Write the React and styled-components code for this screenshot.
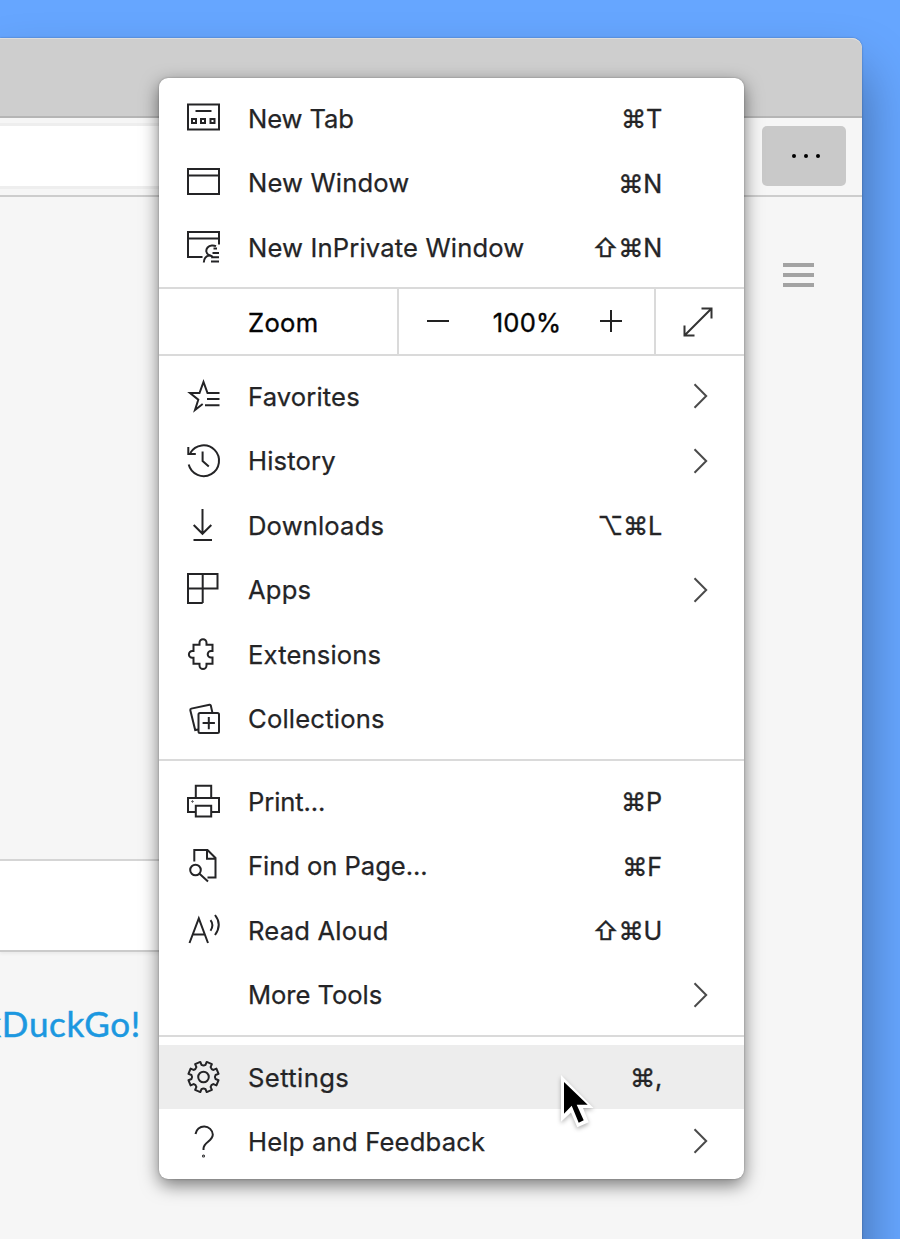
import React from "react";
import styled, { createGlobalStyle } from "styled-components";

const Global = createGlobalStyle`
  * { box-sizing: border-box; }
  body { margin: 0; overflow: hidden; font-family: Inter, "Liberation Sans", sans-serif; }
`;

const Desktop = styled.div`
  position: relative;
  width: 900px;
  height: 1239px;
  padding-top: 38px;
  overflow: hidden;
  background: #66a6ff;
`;

const Browser = styled.div`
  width: 862px;
  height: 1300px;
  display: flex;
  flex-direction: column;
  border-top-right-radius: 10px;
  background: #f6f6f6;
  box-shadow: 0 0 2px rgba(0, 0, 0, 0.35), 0 34px 54px rgba(0, 0, 0, 0.38);
`;

const TabStrip = styled.div`
  height: 80px;
  border-top: 1px solid #dedede;
  border-bottom: 2px solid #b5b5b5;
  border-top-right-radius: 10px;
  background: #cecece;
`;

const Toolbar = styled.div`
  height: 79px;
  display: flex;
  align-items: center;
  justify-content: space-between;
  padding: 0 16px 1px 0;
  border-bottom: 2px solid #cdcdcd;
  background: #f6f6f6;
`;

const AddressField = styled.div`
  width: 600px;
  height: 66px;
  border: 3px solid #eeeeee;
  border-left: 0;
  background: #fff;
`;

const MoreButton = styled.div`
  width: 84px;
  height: 60px;
  display: flex;
  align-items: center;
  justify-content: center;
  gap: 8px;
  padding-left: 3px;
  border-radius: 5px;
  background: #c9c9c9;
`;

const Dot = styled.span`
  width: 4px;
  height: 4px;
  border-radius: 50%;
  background: #000;
`;

const Page = styled.div`
  flex: 1;
  display: flex;
  flex-direction: column;
`;

const PageHeader = styled.div`
  height: 662px;
  display: flex;
  justify-content: flex-end;
  padding: 66px 48px 0 0;
`;

const Burger = styled.div`
  width: 31px;
  height: 24px;
  display: flex;
  flex-direction: column;
  justify-content: space-between;
`;

const BurgerBar = styled.span`
  height: 4px;
  background: #a3a3a3;
`;

const SearchBox = styled.div`
  width: 600px;
  height: 93px;
  border-top: 2px solid #d5d5d5;
  border-bottom: 2px solid #cbcbcb;
  background: #fff;
  box-shadow: 0 2px 3px rgba(0, 0, 0, 0.05);
`;

const Tagline = styled.div`
  width: 141px;
  margin-top: 51px;
  display: flex;
  justify-content: flex-end;
  color: #1c98e0;
  font-family: Lato, sans-serif;
  font-size: 35px;
  -webkit-text-stroke: 0.5px #1c98e0;
  letter-spacing: 0.7px;
  line-height: 40px;
  white-space: nowrap;
`;

const Menu = styled.div`
  position: absolute;
  left: 159px;
  top: 78px;
  width: 585px;
  height: 1101px;
  border-radius: 9px;
  background: #fff;
  color: #242426;
  box-shadow: 0 0 2px rgba(0, 0, 0, 0.3), 0 6px 18px rgba(0, 0, 0, 0.52);
`;

const Section = styled.div`
  padding: ${(p) => p.$top}px 0 ${(p) => p.$bottom}px;
`;

const Separator = styled.div`
  height: 2px;
  background: #dadada;
`;

const Row = styled.div`
  height: ${(p) => p.$h || 64.5}px;
  display: flex;
  align-items: center;
  padding: 0 34px 0 24px;
  background: ${(p) => (p.$active ? "#ededed" : "transparent")};
`;

const IconSlot = styled.span`
  width: 40px;
  height: 40px;
  flex: none;
  margin-right: 25px;
  svg { display: block; }
`;

const Label = styled.span`
  flex: 1;
  font-size: 25.6px;
  -webkit-text-stroke: 0.25px currentColor;
  letter-spacing: ${(p) => p.$ls ?? 0.15}px;
  white-space: nowrap;
`;

const Shortcut = styled.span`
  padding: 2px 48px 0 0;
  font-size: 25.2px;
  -webkit-text-stroke: 0.35px currentColor;
  letter-spacing: -0.2px;
  white-space: nowrap;
`;

const Chevron = styled.svg`
  width: 18px;
  height: 28px;
`;

const ZoomRow = styled.div`
  height: 65px;
  display: flex;
  color: #050505;
  font-size: 25.6px;
  -webkit-text-stroke: 0.35px currentColor;
`;

const ZoomName = styled.div`
  width: 240px;
  display: flex;
  align-items: center;
  padding: 1px 0 0 89px;
  letter-spacing: 0.3px;
  border-right: 2px solid #dadada;
`;

const ZoomControls = styled.div`
  width: 257px;
  display: flex;
  align-items: center;
  justify-content: space-between;
  padding: 0 31px 0 26px;
  border-right: 2px solid #dadada;
`;

const ZoomValue = styled.span`
  padding: 1px 0 0 4px;
  letter-spacing: 0.15px;
`;

const FullScreen = styled.div`
  flex: 1;
  display: flex;
  align-items: center;
  justify-content: center;
  padding-right: 4px;
`;

const Cursor = styled.svg`
  position: absolute;
  left: 552px;
  top: 1066px;
  width: 52px;
  height: 72px;
  filter: drop-shadow(0 2px 2px rgba(0, 0, 0, 0.3));
`;

const ICONS = {
  tab: (
    <>
      <path d="M5 6.500h31v25H5z" />
      <path d="M12.500 13h16" />
      <path d="M9 21h4v4h-4zM18 21h4v4h-4zM27.500 21h4v4h-4z" />
    </>
  ),
  window: <path d="M5 6h31v25H5zM5 12.500h31" />,
  inprivate: (
    <>
      <path d="M19.500 30H5V5h31v12.500M5 11.500h31" />
      <path d="M33 19.200Q31 18.300 28.800 18.500C25.200 18.800 23 21.500 23.300 24.500 23.500 26.200 24.700 27.500 26.500 28.300 23 29 21 31.500 20.800 35.500" />
      <path d="M30.500 21.500h3.500M29.500 26h6.500M28 30.200h8M28 34.500h8M25.500 28.200q2.500.2 4 1.500" />
    </>
  ),
  star: (
    <>
      <path d="M36.500 17H24.500L20.500 6 16.500 17H7l8.300 6.700-3.300 10.300 7.700-6" />
      <path d="M24 23H36.500M22 29.200H36.500" />
    </>
  ),
  history: (
    <>
      <path d="M7.300 12A15.400 15.400 0 1 1 5.700 23.500" />
      <path d="M5.300 6v7h7.500" />
      <path d="M19.600 10.500V20l6.200 5.500" />
    </>
  ),
  download: <path d="M19.500 4v24.500M10.700 20l8.800 8.800L28.300 20M10.500 35h18.500" />,
  apps: <path d="M5 4h29.500V18.500H5zM19.700 4v29M5 18.500v14.500h14.700" />,
  puzzle: (
    <path d="M10.500 10.800h6V8.800a3.500 3.500 0 0 1 7 0v2h6v6.200h-1.500a3.300 3.300 0 0 0 0 6.600h1.500v6.200h-6v1.700a3.500 3.500 0 0 1-7 0v-1.700h-6v-6h-1.200a3.400 3.400 0 0 1 0-6.800h1.200z" />
  ),
  collections: (
    <>
      <rect x="15.500" y="14" width="20.500" height="20" rx="1.500" />
      <path d="M25.800 18v12.300M19.600 24.100h12.300M15.500 30.500l-3.300.5L7.300 11.300q-.3-1.300 1-1.700L26.500 5.800q1-.2 1.300.8l1.600 7" />
    </>
  ),
  print: (
    <>
      <path d="M12.800 31H5V17h31v14h-7.500M12.800 17V4.800h15.400v12M12.800 24.700h15.400v10.700H12.800z" />
      <circle cx="9.500" cy="20.500" r=".7" strokeWidth="1" />
    </>
  ),
  find: (
    <>
      <path d="M11.300 15.500V4h13.200l8 8v19.500h-8M24 4v8.700h8.500" />
      <circle cx="12.500" cy="24" r="5.300" />
      <path d="M16.500 27.800L25 35.500" />
    </>
  ),
  read: (
    <>
      <path d="M6.500 33L15.800 8.300 25 33M10 24.500h11.700" />
      <path d="M27.500 10.200q3.800 4.800 0 10.500M32 5q7.500 9.500 0 20" />
    </>
  ),
  help: (
    <>
      <path d="M12.500 13a8.700 8.700 0 0 1 17.300.5c0 6.800-9.300 7.500-9.300 14v1.500" />
      <circle cx="20.500" cy="35" r=".5" />
    </>
  ),
};

const gearPath = () => {
  const profile = [
    [-13, 12.2],
    [-10.5, 15.400],
    [10.5, 15.400],
    [13, 12.2],
  ];
  const point = (deg, r) => {
    const t = (deg * Math.PI) / 180;
    return `${(20.5 + r * Math.cos(t)).toFixed(2)} ${(20 + r * Math.sin(t)).toFixed(2)}`;
  };
  let d = "";
  for (let i = 0; i < 8; i++) {
    const base = i * 45 + 22.5;
    profile.forEach(([a, r], j) => {
      d += `${i + j === 0 ? "M" : "L"}${point(base + a, r)}`;
    });
    d += `Q${point(base + 22.5, 10.8)} ${point(base + 32, 12.2)}`;
  }
  return `${d}Z`;
};

ICONS.gear = (
  <>
    <path strokeLinejoin="round" d={gearPath()} />
    <circle cx="20.500" cy="20" r="5.300" />
  </>
);

const Icon = ({ name }) => (
  <IconSlot>
    {name && (
      <svg width="40" height="40" viewBox="0 0 40 40" fill="none" stroke="#242426" strokeWidth="2">
        {ICONS[name]}
      </svg>
    )}
  </IconSlot>
);

const Item = ({ icon, label, keys, sub, active, h, ls }) => (
  <Row $active={active} $h={h}>
    <Icon name={icon} />
    <Label $ls={ls}>{label}</Label>
    {keys && <Shortcut>{keys}</Shortcut>}
    {sub && (
      <Chevron viewBox="0 0 18 28" fill="none" stroke="#4a4a4a" strokeWidth="2">
        <path d="M2.500 2.200L14.200 14 2.500 25.800" />
      </Chevron>
    )}
  </Row>
);

export default function App() {
  return (
    <Desktop>
      <Global />
      <Browser>
        <TabStrip />
        <Toolbar>
          <AddressField />
          <MoreButton><Dot /><Dot /><Dot /></MoreButton>
        </Toolbar>
        <Page>
          <PageHeader>
            <Burger><BurgerBar /><BurgerBar /><BurgerBar /></Burger>
          </PageHeader>
          <SearchBox />
          <Tagline>DuckDuckGo!</Tagline>
        </Page>
      </Browser>
      <Menu>
        <Section $top={8} $bottom={7.5}>
          <Item icon="tab" label="New Tab" keys="⌘T" ls={-0.1} />
          <Item icon="window" label="New Window" keys="⌘N" />
          <Item icon="inprivate" label="New InPrivate Window" keys="⇧⌘N" />
        </Section>
        <Separator />
        <ZoomRow>
          <ZoomName>Zoom</ZoomName>
          <ZoomControls>
            <svg width="26" height="26" fill="none" stroke="#222" strokeWidth="2"><path d="M2 12h22" /></svg>
            <ZoomValue>100%</ZoomValue>
            <svg width="24" height="26" fill="none" stroke="#222" strokeWidth="2"><path d="M1 12h22M12 1v22" /></svg>
          </ZoomControls>
          <FullScreen>
            <svg width="32" height="32" fill="none" stroke="#333" strokeWidth="2"><path d="M3 29L29 3M19.500 2.500H29.500V12.500M2.500 19.500V29.500H12.500" /></svg>
          </FullScreen>
        </ZoomRow>
        <Separator />
        <Section $top={8} $bottom={8}>
          <Item icon="star" label="Favorites" sub />
          <Item icon="history" label="History" sub />
          <Item icon="download" label="Downloads" keys="⌥⌘L" />
          <Item icon="apps" label="Apps" sub />
          <Item icon="puzzle" label="Extensions" />
          <Item icon="collections" label="Collections" ls={0.2} />
        </Section>
        <Separator />
        <Section $top={8} $bottom={8}>
          <Item icon="print" label="Print..." keys="⌘P" ls={-0.1} />
          <Item icon="find" label="Find on Page..." keys="⌘F" ls={-0.05} />
          <Item icon="read" label="Read Aloud" keys="⇧⌘U" ls={0.2} />
          <Item label="More Tools" sub ls={-0.05} />
        </Section>
        <Separator />
        <Section $top={8} $bottom={6}>
          <Item icon="gear" label="Settings" keys="⌘," active h={64} ls={0.4} />
          <Item icon="help" label="Help and Feedback" sub ls={0.2} />
        </Section>
      </Menu>
      <Cursor viewBox="0 0 52 72">
        <path d="M9 9v46.700L19 46.500 25.300 61.300 36.700 56.300 31 42H41.500z" fill="#fff" />
        <path d="M12 16v31.700l7.700-8 7 17 5-2.400-7-15.600h11z" fill="#000" />
      </Cursor>
    </Desktop>
  );
}
